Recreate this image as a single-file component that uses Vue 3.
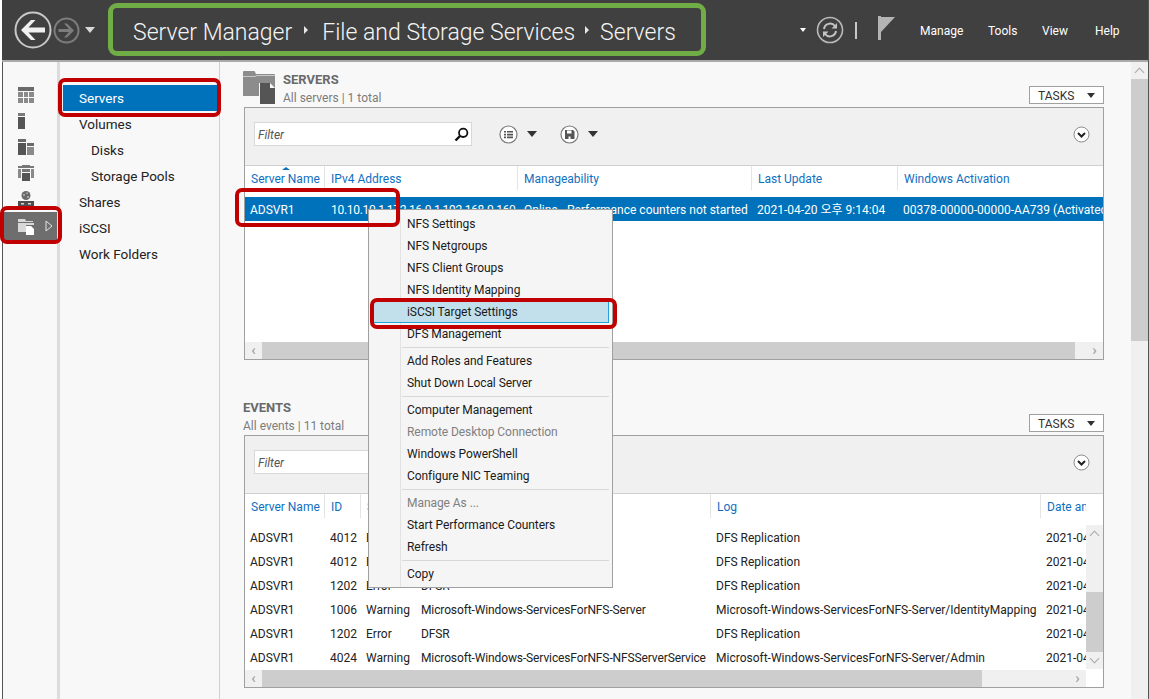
<script setup>
const navItems = [
  { label: 'Servers', active: true },
  { label: 'Volumes' },
  { label: 'Disks', sub: true },
  { label: 'Storage Pools', sub: true },
  { label: 'Shares' },
  { label: 'iSCSI' },
  { label: 'Work Folders' }
]
const menuGroups = [
  [
    { t: 'NFS Settings' }, { t: 'NFS Netgroups' }, { t: 'NFS Client Groups' },
    { t: 'NFS Identity Mapping' }, { t: 'iSCSI Target Settings', hot: true }, { t: 'DFS Management' }
  ],
  [{ t: 'Add Roles and Features' }, { t: 'Shut Down Local Server' }],
  [
    { t: 'Computer Management' }, { t: 'Remote Desktop Connection', off: true },
    { t: 'Windows PowerShell' }, { t: 'Configure NIC Teaming' }
  ],
  [{ t: 'Manage As ...', off: true }, { t: 'Start Performance Counters' }, { t: 'Refresh' }],
  [{ t: 'Copy' }]
]
const serverHead = ['Server Name', 'IPv4 Address', 'Manageability', 'Last Update', 'Windows Activation']
const serverRow = [
  'ADSVR1', '10.10.10.1,172.16.0.1,192.168.0.160', 'Online - Performance counters not started',
  '2021-04-20 오후 9:14:04', '00378-00000-00000-AA739 (Activated)'
]
const eventHead = ['Server Name', 'ID', 'Severity', 'Source', 'Log', 'Date and Time']
const date = '2021-04-20 오후 9:14:04'
const eventRows = [
  ['ADSVR1', '4012', 'Error', 'DFSR', 'DFS Replication', date],
  ['ADSVR1', '4012', 'Error', 'DFSR', 'DFS Replication', date],
  ['ADSVR1', '1202', 'Error', 'DFSR', 'DFS Replication', date],
  ['ADSVR1', '1006', 'Warning', 'Microsoft-Windows-ServicesForNFS-Server', 'Microsoft-Windows-ServicesForNFS-Server/IdentityMapping', date],
  ['ADSVR1', '1202', 'Error', 'DFSR', 'DFS Replication', date],
  ['ADSVR1', '4024', 'Warning', 'Microsoft-Windows-ServicesForNFS-NFSServerService', 'Microsoft-Windows-ServicesForNFS-Server/Admin', date]
]
</script>

<template>
  <div class="window">
    <header class="topbar">
      <svg class="back" width="38" height="38" viewBox="0 0 38 38">
        <circle cx="19" cy="19" r="17.5" fill="none" stroke="#c8c8c8" stroke-width="2" />
        <path d="M7 19 L17 9 H21.5 L14.5 16.5 H31 V21.5 H14.5 L21.5 29 H17 Z" fill="#f0f0f0" />
      </svg>
      <svg class="fwd" width="27" height="27" viewBox="0 0 27 27">
        <circle cx="13.5" cy="13.5" r="12" fill="none" stroke="#7c7c7c" stroke-width="2" />
        <path d="M21 13.5 L14 6.5 H11 L16 12 H5.5 V15 H16 L11 20.5 H14 Z" fill="#7c7c7c" />
      </svg>
      <i class="tri hist" />
      <nav class="crumbs">
        <span>Server Manager</span><i class="sep sep-a" />
        <span>File and Storage Services</span><i class="sep sep-b" />
        <span>Servers</span>
      </nav>
      <i class="tri refdrop" />
      <svg class="refresh" width="28" height="28" viewBox="0 0 28 28">
        <circle cx="14" cy="14" r="12.5" fill="none" stroke="#b8b8b8" stroke-width="1.6" />
        <path d="M8 13 a6.2 6.2 0 0 1 11 -3 M20 15 a6.2 6.2 0 0 1 -11 3" fill="none" stroke="#c4c4c4" stroke-width="2" />
        <path d="M21 7 V12.5 H15.5 Z M7 21 V15.5 H12.5 Z" fill="#c4c4c4" />
      </svg>
      <i class="pipe" />
      <svg class="flag" width="17" height="24" viewBox="0 0 17 24">
        <rect x="0" y="0" width="3" height="24" fill="#b4b4b4" />
        <path d="M3 1 H17 L3 16 Z" fill="#b4b4b4" />
      </svg>
      <div class="menus">
        <span>Manage</span><span>Tools</span><span>View</span><span>Help</span>
      </div>
    </header>

    <div class="body">
      <aside class="rail">
        <div class="rail-item">
          <svg width="16" height="16" viewBox="0 0 16 16">
            <rect width="16" height="4" fill="#6a6a6a" />
            <path d="M0 5h5v5H0zM6 5h4v5H6zM11 5h5v5h-5zM0 11h5v5H0zM6 11h4v5H6zM11 11h5v5h-5z" fill="#8a8a8a" />
          </svg>
        </div>
        <div class="rail-item">
          <svg width="8" height="16" viewBox="0 0 8 16">
            <rect width="7" height="3" fill="#7a7a7a" />
            <rect y="4" width="7" height="12" fill="#555" />
          </svg>
        </div>
        <div class="rail-item">
          <svg width="16" height="16" viewBox="0 0 16 16">
            <rect width="8" height="3" fill="#6a6a6a" />
            <rect y="4" width="8" height="12" fill="#555" />
            <rect x="9" y="4" width="7" height="3" fill="#6a6a6a" />
            <rect x="9" y="8" width="7" height="8" fill="#8a8a8a" />
          </svg>
        </div>
        <div class="rail-item">
          <svg width="16" height="16" viewBox="0 0 16 16">
            <path d="M0 1h4v2H0zM12 1h4v2h-4zM4 0h8v3H4z" fill="#777" />
            <path d="M0 4h3v9H0zM13 4h3v9h-3z" fill="#8a8a8a" />
            <rect x="4" y="4" width="8" height="3" fill="#777" />
            <rect x="4" y="8" width="8" height="8" fill="#555" />
          </svg>
        </div>
        <div class="rail-item">
          <svg width="16" height="17" viewBox="0 0 16 17">
            <circle cx="8" cy="4.5" r="4.5" fill="#6a6a6a" />
            <path d="M5 3h2v2H5zM9 5h2v2H9zM8 1.5h2v1.5H8z" fill="#a4a4a4" />
            <rect y="10" width="16" height="7" fill="#4e4e4e" />
            <rect x="3" y="12" width="3" height="1.5" fill="#d8d8d8" />
            <rect x="10" y="12" width="3" height="1.5" fill="#d8d8d8" />
          </svg>
        </div>
        <div class="rail-item selected">
          <svg width="17" height="17" viewBox="0 0 17 17">
            <path d="M0 1h7l1 2h7v1H0z" fill="#d8d8d8" />
            <path d="M0 5h16v2H8v7H0z" fill="#d8d8d8" />
            <path d="M8 8h5l3 3v6H8z" fill="#fff" />
          </svg>
          <svg class="rail-arrow" width="8" height="12" viewBox="0 0 8 12">
            <path d="M1 1 L7 6 L1 11 Z" fill="none" stroke="#e4e4e4" />
          </svg>
        </div>
      </aside>
      <div class="stripe" />

      <nav class="nav">
        <div
          v-for="item in navItems"
          :key="item.label"
          class="nav-item"
          :class="{ active: item.active, sub: item.sub }"
        >{{ item.label }}</div>
      </nav>

      <main class="main">
        <section>
          <div class="head">
            <svg class="head-icon" width="33" height="34" viewBox="0 0 33 34">
              <path d="M0 5 V2 Q0 1 1 1 H11 Q12 1 12 2 L13 4 H31 Q32 4 32 5 V26 H0 Z" fill="#8c8c8c" />
              <path d="M0 6 H12 L14 5 H32 V6 H14 L12 7 H0 Z" fill="#c8c8c8" />
              <path d="M16 13 H27 L32 18 V34 H16 Z" fill="#f8f8f8" />
              <path d="M17 13 H27 V18 H32 V34 H17 Z" fill="#555" />
            </svg>
            <div class="titles">
              <h2>SERVERS</h2>
              <p>All servers | 1 total</p>
            </div>
            <button class="tasks">TASKS<i class="tri dark" /></button>
          </div>
          <div class="panel">
            <div class="toolbar">
              <div class="filter">
                <em>Filter</em>
                <svg width="15" height="15" viewBox="0 0 15 15">
                  <circle cx="9.2" cy="5.8" r="4.2" fill="none" stroke="#111" stroke-width="1.8" />
                  <path d="M6 9 L1.5 13.5" stroke="#111" stroke-width="2.4" />
                </svg>
              </div>
              <svg class="round first" width="19" height="19" viewBox="0 0 19 19">
                <circle cx="9.5" cy="9.5" r="8.5" fill="#fff" stroke="#7a7a7a" stroke-width="1.2" />
                <path d="M5 6h2v1.6H5zM5 8.8h2v1.6H5zM5 11.6h2v1.6H5zM8 6h6v1.6H8zM8 8.8h6v1.6H8zM8 11.6h6v1.6H8z" fill="#555" />
              </svg>
              <i class="tri dark big" />
              <svg class="round" width="19" height="19" viewBox="0 0 19 19">
                <circle cx="9.5" cy="9.5" r="8.5" fill="#fff" stroke="#7a7a7a" stroke-width="1.2" />
                <path d="M5 5h8l1.5 1.5V14H5z" fill="#555" />
                <path d="M7 5.5h4.5V8.5H7z" fill="#fff" />
                <path d="M8.5 11.5h2V14h-2z" fill="#fff" />
              </svg>
              <i class="tri dark big" />
              <svg class="chev" width="17" height="17" viewBox="0 0 17 17">
                <circle cx="8.5" cy="8.5" r="7.5" fill="#fff" stroke="#8a8a8a" />
                <path d="M5 7 L8.5 10.5 L12 7" fill="none" stroke="#222" stroke-width="2" />
              </svg>
            </div>
            <div class="grid-body">
              <div class="row heading servers-cols">
                <div v-for="(h, i) in serverHead" :key="h" class="hcell">
                  <i v-if="i === 0" class="sort" />{{ h }}
                </div>
              </div>
              <div class="row data selected-row servers-cols">
                <div v-for="c in serverRow" :key="c" class="cell">{{ c }}</div>
              </div>
            </div>
            <div class="hscroll">
              <span class="arrow">‹</span>
              <div class="thumb thumb-wide" />
              <span class="arrow">›</span>
            </div>
          </div>
        </section>

        <section class="events">
          <div class="head">
            <div class="titles">
              <h2>EVENTS</h2>
              <p>All events | 11 total</p>
            </div>
            <button class="tasks">TASKS<i class="tri dark" /></button>
          </div>
          <div class="panel">
            <div class="toolbar">
              <div class="filter"><em>Filter</em></div>
              <svg class="chev" width="17" height="17" viewBox="0 0 17 17">
                <circle cx="8.5" cy="8.5" r="7.5" fill="#fff" stroke="#8a8a8a" />
                <path d="M5 7 L8.5 10.5 L12 7" fill="none" stroke="#222" stroke-width="2" />
              </svg>
            </div>
            <div class="events-wrap">
              <div class="events-main">
                <div class="grid-body">
                  <div class="row heading tall events-cols">
                    <div v-for="h in eventHead" :key="h" class="hcell">{{ h }}</div>
                  </div>
                  <div v-for="(r, ri) in eventRows" :key="ri" class="row data events-cols">
                    <div v-for="(c, ci) in r" :key="ci" class="cell">{{ c }}</div>
                  </div>
                </div>
                <div class="hscroll">
                  <span class="arrow">‹</span>
                  <div class="thumb thumb-mid" />
                  <span class="arrow">›</span>
                </div>
              </div>
              <div class="vscroll">
                <span class="varrow up" />
                <div class="vthumb" />
                <span class="varrow down" />
              </div>
            </div>
          </div>
        </section>
      </main>

      <div class="pagescroll">
        <span class="varrow up" />
        <div class="page-thumb" />
      </div>
    </div>

    <div class="context">
      <div v-for="(group, gi) in menuGroups" :key="gi" class="mgroup">
        <div
          v-for="m in group"
          :key="m.t"
          class="mitem"
          :class="{ hot: m.hot, off: m.off }"
        >{{ m.t }}</div>
      </div>
    </div>

    <i class="mark green" />
    <i class="mark red m-nav" />
    <i class="mark red m-row" />
    <i class="mark red m-rail" />
    <i class="mark red m-menu" />
  </div>
</template>

<style>
html, body { margin: 0; background: #fff; overflow: hidden; }
</style>

<style scoped>
.window {
  position: relative;
  box-sizing: border-box;
  width: 1149px;
  height: 699px;
  display: flex;
  flex-direction: column;
  padding: 0 0 0 2px;
  border-right: 1px solid #555;
  font: 12px/16px Roboto, "Noto Sans CJK KR", sans-serif;
  color: #222;
  overflow: hidden;
  background: #f8f8f8;
}
.window::before {
  content: "";
  position: absolute;
  left: 0;
  top: 0;
  bottom: 0;
  width: 2px;
  background: #fff;
  border-right: 1px solid #555;
}
.topbar {
  flex: none;
  height: 60px;
  border-bottom: 2px solid #aaa;
  background: #404040;
  display: flex;
  align-items: center;
  color: #fff;
  position: relative;
}
.back { margin-left: 12px; }
.fwd { margin-left: 1px; }
.tri {
  display: inline-block;
  width: 0;
  height: 0;
  border-left: 4px solid transparent;
  border-right: 4px solid transparent;
  border-top: 5px solid #d8d8d8;
}
.hist { margin-left: 5px; border-left-width: 5px; border-right-width: 5px; border-top-width: 6px; }
.crumbs {
  margin-left: 38px;
  padding-top: 6px;
  display: flex;
  align-items: center;
  font-size: 23px;
  line-height: 30px;
  font-weight: 300;
  color: #f4f4f4;
  width: 661px;
  white-space: nowrap;
}
.sep {
  width: 0;
  height: 0;
  border-top: 4px solid transparent;
  border-bottom: 4px solid transparent;
  border-left: 4px solid #e8e8e8;
}
.sep-a { margin: -6px 14px 0 12px; }
.sep-b { margin: -6px 11px 0 10px; }
.refdrop { border-top-color: #fff; margin-left: 6px; border-left-width: 3.5px; border-right-width: 3.5px; border-top-width: 4px; }
.refresh { margin-left: 10px; }
.pipe { width: 2px; height: 17px; margin-left: 11px; background: #c8c8c8; }
.flag { margin-left: 21px; margin-top: -4px; }
.menus { display: flex; margin-left: 25px; padding-top: 2px; }
.menus span { margin-right: 0; }
.menus span:nth-child(1) { width: 68px; }
.menus span:nth-child(2) { width: 54px; }
.menus span:nth-child(3) { width: 53px; }

.body { flex: 1; min-height: 0; display: flex; }
.rail { flex: none; width: 55px; padding-top: 20px; box-sizing: border-box; background: #f8f8f8; }
.rail-item { height: 26px; display: flex; align-items: center; padding-left: 16px; box-sizing: border-box; }
.rail-item.selected { height: 28px; margin-top: 0; background: #6e6e6e; position: relative; }
.rail-arrow { margin-left: 10px; }
.stripe { flex: none; width: 3px; background: #dcdcdc; }
.nav {
  flex: none;
  width: 159px;
  border-right: 1px solid #cfcfcf;
  background: #f8f8f8;
  padding-top: 23px;
  box-sizing: content-box;
  font-size: 13.5px;
}
.nav-item { height: 26px; line-height: 27px; padding-left: 19px; }
.nav-item.sub { padding-left: 31px; }
.nav-item.active { margin: 0 2px 0 3px; padding-left: 16px; color: #fff; background: #0072bc; }

.main { flex: 1; min-width: 0; padding: 9px 27px 0 24px; box-sizing: border-box; }
.head { display: flex; align-items: flex-end; height: 36px; margin-left: -1px; position: relative; }
.head-icon { align-self: flex-start; margin: -1px 7px 0 0; }
.titles { padding-bottom: 1px; }
h2 { margin: 0 0 2px; font-size: 13px; line-height: 16px; font-weight: 700; color: #6a6a6a; }
.titles p { margin: 0; color: #7c7c7c; }
.tasks {
  margin: 0 0 3px auto;
  box-sizing: border-box;
  width: 75px;
  height: 18px;
  padding: 1px 8px 0;
  display: flex;
  align-items: center;
  justify-content: space-between;
  border: 1px solid #a0a0a0;
  background: #fff;
  font: inherit;
  color: #333;
}
.tri.dark { border-top-color: #333; }
.tri.big { border-left-width: 5px; border-right-width: 5px; border-top-width: 6px; margin-left: 9px; }
.panel {
  box-sizing: border-box;
  width: 860px;
  height: 253px;
  border: 1px solid #a0a0a0;
  background: #fff;
  display: flex;
  flex-direction: column;
}
.toolbar {
  flex: none;
  height: 58px;
  box-sizing: border-box;
  padding: 0 13px 5px 9px;
  display: flex;
  align-items: center;
  background: #f0f0f0;
  border-bottom: 1px solid #d0d0d0;
}
.filter {
  box-sizing: border-box;
  width: 218px;
  height: 24px;
  padding: 1px 1px 0 3px;
  display: flex;
  align-items: center;
  justify-content: space-between;
  background: #fff;
  border: 1px solid #d8d8d8;
}
.filter em { color: #555; }
.filter svg { margin: -1px 1px 0 0; }
.round { margin-left: 23px; }
.round.first { margin-left: 27px; }
.chev { margin-left: auto; }
.grid-body { flex: 1; min-height: 0; overflow: hidden; background: #fff; }
.row { display: grid; white-space: nowrap; }
.servers-cols { grid-template-columns: 80px 193px 234px 146px 206px; }
.events-cols { grid-template-columns: 80px 36px 54px 296px 330px 45px; }
.heading { height: 31px; }
.heading.tall { height: 32px; }
.hcell {
  position: relative;
  padding: 5px 0 0 6px;
  box-sizing: border-box;
  height: 24px;
  color: #0f6fbf;
  border-right: 1px solid #e4e4e4;
  overflow: hidden;
}
.hcell:last-child { border-right: 0; }
.sort {
  position: absolute;
  left: 37px;
  top: 1px;
  border-left: 4px solid transparent;
  border-right: 4px solid transparent;
  border-bottom: 3px solid #0f6fbf;
}
.data { height: 24px; line-height: 25px; }
.cell { padding-left: 5px; overflow: hidden; color: #222; }
.servers-cols .cell:nth-child(2), .servers-cols .cell:nth-child(3) { padding-left: 6px; }
.servers-cols .cell:nth-child(2) { letter-spacing: -0.3px; }
.events-cols .cell:nth-child(4) { padding-left: 6px; letter-spacing: -0.12px; }
.selected-row { background: #0072bc; margin-top: 0; line-height: 26px; }
.selected-row .cell { color: #fff; }
.hscroll {
  flex: none;
  height: 17px;
  display: flex;
  align-items: center;
  background: #f0f0f0;
  color: #9a9a9a;
  justify-content: space-between;
}
.arrow { width: 17px; text-align: center; font-size: 15px; line-height: 15px; }
.thumb { height: 17px; background: #cdcdcd; }
.thumb-wide { width: 813px; margin-right: auto; }
.thumb-mid { width: 720px; margin-right: auto; }
.events { margin-top: 39px; }
.events-wrap { flex: 1; min-height: 0; display: flex; }
.events-main { width: 841px; display: flex; flex-direction: column; }
.vscroll {
  flex: none;
  width: 17px;
  height: 144px;
  margin-top: 31px;
  display: flex;
  flex-direction: column;
  background: #f0f0f0;
}
.vthumb { height: 60px; margin-top: 50px; background: #cdcdcd; }
.varrow { height: 17px; position: relative; display: block; flex: none; }
.varrow::after {
  content: "";
  position: absolute;
  left: 5px;
  width: 6px;
  height: 6px;
  border-left: 1px solid #a8a8a8;
  border-top: 1px solid #a8a8a8;
}
.varrow.up::after { top: 7px; transform: rotate(45deg); }
.varrow.down::after { top: 3px; transform: rotate(225deg); }
.pagescroll { flex: none; width: 17px; background: #f0f0f0; }
.page-thumb { height: 262px; background: #cdcdcd; }

.context {
  position: absolute;
  left: 368px;
  top: 209px;
  width: 245px;
  box-sizing: border-box;
  padding: 3px 2px 2px;
  background: linear-gradient(to right, #f5f5f5 31px, #e2e2e2 31px, #e2e2e2 32px, #f5f5f5 32px);
  border: 1px solid #a0a0a0;
  color: #1a1a1a;
  letter-spacing: -0.06px;
}
.mgroup + .mgroup { margin-top: 5px; position: relative; }
.mgroup + .mgroup::before {
  content: "";
  position: absolute;
  left: 31px;
  right: 1px;
  top: -3px;
  height: 1px;
  background: #d8d8d8;
}
.mitem { height: 22px; line-height: 22px; padding-left: 36px; }
.mitem.off { color: #808080; }
.mitem.hot {
  margin: 0 1px;
  padding-left: 34px;
  line-height: 20px;
  box-sizing: border-box;
  background: #c2dfec;
  border: 1px solid #26a0da;
}

.mark { position: absolute; box-sizing: border-box; pointer-events: none; }
.red { border: 4px solid #c00000; border-radius: 7px; }
.green { left: 108px; top: 3px; width: 598px; height: 53px; border: 5px solid #70ad47; border-radius: 9px; }
.m-nav { left: 58px; top: 78px; width: 163px; height: 39px; }
.m-row { left: 235px; top: 188px; width: 165px; height: 39px; }
.m-rail { left: 0; top: 206px; width: 62px; height: 38px; }
.m-menu { left: 370px; top: 298px; width: 247px; height: 31px; }
</style>
